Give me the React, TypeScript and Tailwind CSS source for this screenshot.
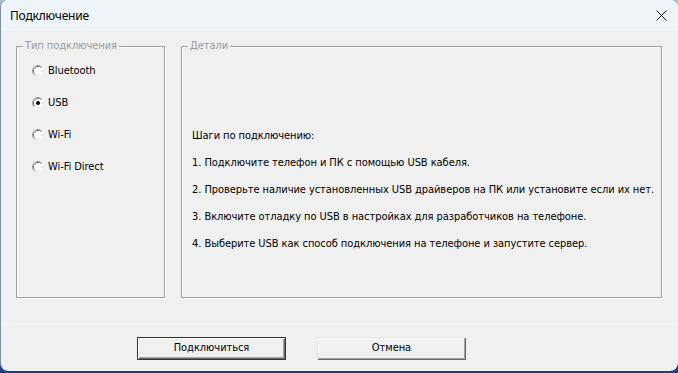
import React, { useState } from "react";

const ui = '"DejaVu Sans Condensed", "DejaVu Sans", sans-serif';

const types = ["Bluetooth", "USB", "Wi-Fi", "Wi-Fi Direct"];

const steps = [
  "Шаги по подключению:",
  "1. Подключите телефон и ПК с помощью USB кабеля.",
  "2. Проверьте наличие установленных USB драйверов на ПК или установите если их нет.",
  "3. Включите отладку по USB в настройках для разработчиков на телефоне.",
  "4. Выберите USB как способ подключения на телефоне и запустите сервер.",
];

function Radio({ checked }: { checked: boolean }) {
  return (
    <svg width="12" height="12" viewBox="0 0 12 12" className="shrink-0">
      <path d="M2.11 9.89 A5.5 5.5 0 0 1 9.89 2.11" fill="none" stroke="#a0a0a0" />
      <path d="M9.89 2.11 A5.5 5.5 0 0 1 2.11 9.89" fill="none" stroke="#ffffff" />
      <path d="M2.82 9.18 A4.5 4.5 0 0 1 9.18 2.82" fill="none" stroke="#696969" />
      <path d="M9.18 2.82 A4.5 4.5 0 0 1 2.82 9.18" fill="none" stroke="#e3e3e3" />
      <circle cx="6" cy="6" r="4" fill="#ffffff" />
      {checked && <circle cx="6" cy="6" r="2" fill="#000000" />}
    </svg>
  );
}

function GroupBox({ title, className, children }: { title: string; className: string; children: React.ReactNode }) {
  return (
    <div
      className={`relative h-[252px] border border-[#a0a0a0] shadow-[inset_1px_1px_0_#ffffff,1px_1px_0_#ffffff] ${className}`}
    >
      <span className="absolute -top-[8px] left-[6px] bg-[#f0f0f0] px-[2px] text-[11px] leading-[14px] text-[#9a9a9a]">
        {title}
      </span>
      {children}
    </div>
  );
}

export default function App() {
  const [type, setType] = useState("USB");

  return (
    <div className="h-[373px] w-[678px] overflow-hidden bg-gradient-to-b from-[#a9bccd] to-[#1d3f8c]">
      <div
        className="flex h-[371px] flex-col overflow-hidden rounded-[8px] border-l border-[#7d8fa3] bg-[#f0f0f0] tracking-[-0.06px] text-black"
        style={{ fontFamily: ui }}
      >
        <div className="flex h-[31px] shrink-0 items-center justify-between bg-[#eff4f9] pl-[9px] pr-[11px]">
          <span
            className="text-[12px] leading-none tracking-[-0.2px]"
            style={{ fontFamily: '"Noto Sans", sans-serif' }}
          >
            Подключение
          </span>
          <svg width="11" height="11" viewBox="0 0 11 11">
            <path d="M0.5 0.5 L10.5 10.5 M10.5 0.5 L0.5 10.5" stroke="#1b1b1b" strokeWidth="1" />
          </svg>
        </div>

        <div className="flex gap-[16px] pl-[15px] pt-[15px]">
          <GroupBox title="Тип подключения" className="w-[149px]">
            <div className="flex flex-col pl-[15px] pt-[8px]">
              {types.map((t) => (
                <button
                  key={t}
                  onClick={() => setType(t)}
                  className="flex h-[32px] items-center gap-[4px] text-left text-[11px]"
                >
                  <Radio checked={type === t} />
                  <span>{t}</span>
                </button>
              ))}
            </div>
          </GroupBox>

          <GroupBox title="Детали" className="w-[481px]">
            <div className="flex flex-col pl-[10px] pt-[76px]">
              {steps.map((s) => (
                <p key={s} className="flex h-[27px] items-center whitespace-nowrap text-[11px]">
                  {s}
                </p>
              ))}
            </div>
          </GroupBox>
        </div>

        <div className="mt-[25px] h-px bg-white" />

        <div className="flex gap-[31px] pl-[136px] pt-[13px]">
          <button className="h-[23px] w-[149px] border border-[#333333] bg-[#f0f0f0] text-[11px] shadow-[inset_1px_1px_0_#ffffff,inset_-1px_-1px_0_#696969,inset_-2px_-2px_0_#a0a0a0]">
            Подключиться
          </button>
          <button className="h-[23px] w-[149px] bg-[#f0f0f0] text-[11px] shadow-[inset_1px_1px_0_#e3e3e3,inset_-1px_-1px_0_#696969,inset_2px_2px_0_#ffffff,inset_-2px_-2px_0_#a0a0a0]">
            Отмена
          </button>
        </div>
      </div>
    </div>
  );
}
